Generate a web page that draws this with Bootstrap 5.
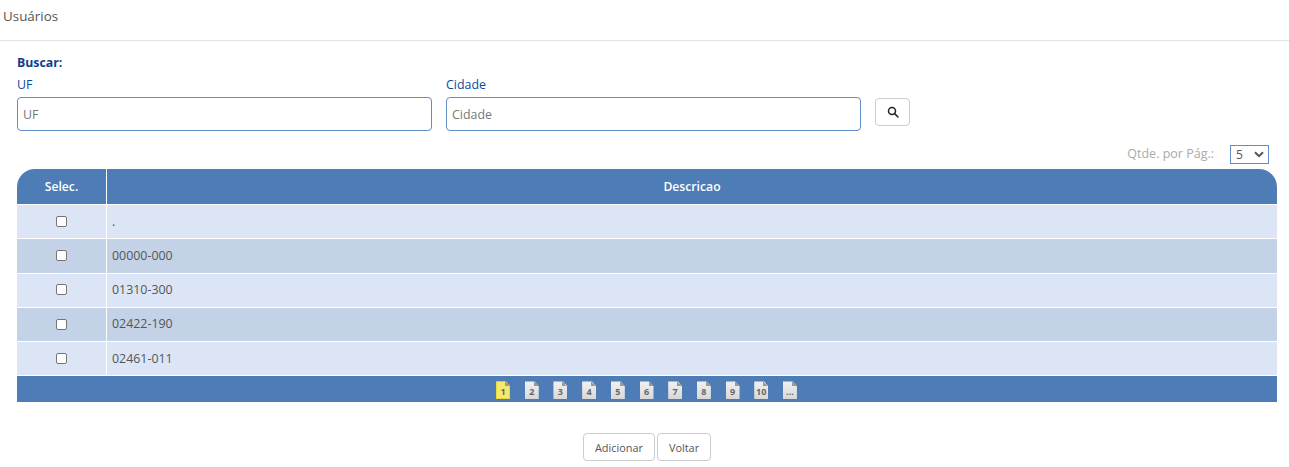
<!DOCTYPE html>
<html lang="pt-BR">
<head>
<meta charset="utf-8">
<title>Usuários</title>
<link rel="stylesheet" href="https://cdn.jsdelivr.net/npm/bootstrap@5.3.0/dist/css/bootstrap.min.css">
<style>
html,body{height:467px;overflow:hidden}
body{font-family:"Open Sans","Noto Sans",sans-serif;font-size:12.4px;color:#555;background:#fff}
.top-title{height:41px;padding:7px 3px 0;border-bottom:1px solid #e3e3e3;font-size:13.4px;line-height:18px;color:#555}
.page-body{padding:14px 12px 0 17px}
.search-title{font-size:12.3px;font-weight:700;color:#0b3f8f;line-height:16px;height:16px}
.search-row{display:flex;align-items:flex-start;gap:14px;margin-top:6px}
.search-field{width:415px}
.search-field label{display:block;color:#0b4a9b;font-size:12.4px;line-height:16px;height:20px;margin:0}
.search-field .form-control{height:34px;padding:0 5px;font-size:12.4px;color:#555;border:1px solid #5f8dc7;border-radius:4px;box-shadow:none}
.search-field .form-control::placeholder{color:#777;opacity:1}
.search-btn{width:35px;height:28px;margin-top:21px;padding:0;border:1px solid #ccc;border-radius:4px;background:#fff;display:flex;align-items:center;justify-content:center}
.qty-row{display:flex;justify-content:flex-end;align-items:center;height:20px;margin-top:13px;padding-right:8px;color:#aaa;font-size:12.5px}
.qty-row span{margin-right:16px}
.qty-select{width:39px;height:19px;padding:0 0 0 5px;font-size:12px;line-height:17px;color:#555;border:1px solid #5f8dc7;border-radius:0;appearance:none;background:#fff url("data:image/svg+xml,%3Csvg xmlns='http://www.w3.org/2000/svg' width='10' height='7' viewBox='0 0 10 7'%3E%3Cpath d='M1 1.2 5 5.2 9 1.2' fill='none' stroke='%23555' stroke-width='2'/%3E%3C/svg%3E") no-repeat right 4px center}
.grid-wrap{margin-top:5px;width:1260px}
.data-grid{width:100%;margin:0;border-collapse:separate;border-spacing:0;table-layout:fixed;font-size:12.4px}
.data-grid th{height:36px;background:#4d7cb6;color:#fff;font-weight:600;text-align:center;vertical-align:middle;padding:1px 0 0;border-bottom:1px solid #fff;font-size:12.2px}
.data-grid th:first-child{width:90px;border-right:1px solid #fff;border-top-left-radius:18px}
.data-grid th:last-child{border-top-right-radius:18px}
.data-grid td{height:34.3px;padding:.4px 5px 0;vertical-align:middle;color:#555;border-bottom:1px solid #fff;background:#dbe5f5}
.data-grid tr.alt td{background:#c3d2e6}
.data-grid td:first-child{text-align:center;padding:0;border-right:1px solid #fff}
.row-check{display:block;width:11px;height:11px;margin:0 auto 1px;appearance:none;border:1px solid #767676;border-radius:2px;background:#fff}
.pager-bar{height:26px;background:#4d7cb6;display:flex;justify-content:center;align-items:flex-start;gap:14.7px;padding:5px 1px 0 0}
.page-doc{position:relative;display:flex;align-items:flex-end;justify-content:center;width:14px;height:18px;padding-bottom:2px;background:linear-gradient(#f2f2f2,#d8d8d8);clip-path:polygon(0 0,70% 0,100% 26%,100% 100%,0 100%);font-size:9px;font-weight:700;line-height:11px;color:#666;text-decoration:none}
.page-doc::after{content:"";position:absolute;top:0;right:0;width:5px;height:5px;background:linear-gradient(45deg,#9a9a9a 50%,transparent 50%)}
.page-doc.current{background:#f4e96e;box-shadow:inset 0 0 0 1px #e6d93a}
.actions{display:flex;justify-content:center;gap:2px;margin-top:31px}
.act-btn{height:28px;padding:1px 11px 0;font-size:10.9px;color:#555;background:#fff;border:1px solid #ccc;border-radius:4px}
</style>
</head>
<body>
<div class="top-title">Usuários</div>
<div class="page-body">
  <div class="search-title">Buscar:</div>
  <div class="search-row">
    <div class="search-field"><label for="f-uf">UF</label><input id="f-uf" class="form-control" placeholder="UF"></div>
    <div class="search-field"><label for="f-cid">Cidade</label><input id="f-cid" class="form-control" placeholder="Cidade"></div>
    <button type="button" class="btn search-btn" aria-label="Buscar">
      <svg width="12" height="12" viewBox="0 0 12 12" fill="none" stroke="#222" stroke-width="1.5"><circle cx="5" cy="5" r="3.5"/><path d="M7.6 7.6 11 11" stroke-linecap="round"/></svg>
    </button>
  </div>
  <div class="qty-row"><span>Qtde. por Pág.:</span>
    <select class="qty-select"><option>5</option><option>10</option></select>
  </div>
  <div class="grid-wrap">
    <table class="table data-grid">
      <thead><tr><th>Selec.</th><th>Descricao</th></tr></thead>
      <tbody>
        <tr><td><input type="checkbox" class="row-check"></td><td>.</td></tr>
        <tr class="alt"><td><input type="checkbox" class="row-check"></td><td>00000-000</td></tr>
        <tr><td><input type="checkbox" class="row-check"></td><td>01310-300</td></tr>
        <tr class="alt"><td><input type="checkbox" class="row-check"></td><td>02422-190</td></tr>
        <tr><td><input type="checkbox" class="row-check"></td><td>02461-011</td></tr>
      </tbody>
    </table>
    <div class="pager-bar">
      <a class="page-doc current">1</a><a class="page-doc">2</a><a class="page-doc">3</a><a class="page-doc">4</a><a class="page-doc">5</a><a class="page-doc">6</a><a class="page-doc">7</a><a class="page-doc">8</a><a class="page-doc">9</a><a class="page-doc">10</a><a class="page-doc">...</a>
    </div>
  </div>
  <div class="actions">
    <button type="button" class="btn act-btn">Adicionar</button>
    <button type="button" class="btn act-btn">Voltar</button>
  </div>
</div>
<script src="https://cdn.jsdelivr.net/npm/bootstrap@5.3.0/dist/js/bootstrap.bundle.min.js"></script>
</body>
</html>
